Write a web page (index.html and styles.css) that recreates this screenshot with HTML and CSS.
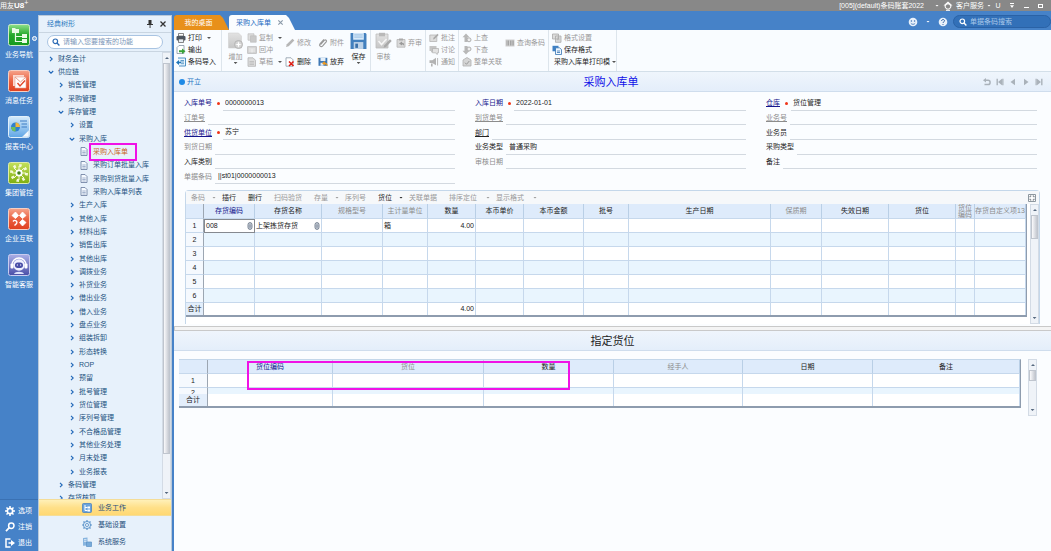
FILE: index.html
```
<!DOCTYPE html>
<html lang="zh-Hans">
<head>
  <meta charset="UTF-8" />
  <meta name="viewport" content="width=device-width, initial-scale=1.0" />
  <title>采购入库单</title>
  <link rel="stylesheet" href="styles.css">
</head>
<body>
  <!-- 图标 -->
  <svg class="sprite" aria-hidden="true">
    <defs>
      <linearGradient id="gGreen" x1="0" y1="0" x2="0" y2="1"><stop offset="0" stop-color="#8fe08a"/><stop offset=".5" stop-color="#25a82c"/><stop offset="1" stop-color="#159a1e"/></linearGradient>
      <linearGradient id="gRed" x1="0" y1="0" x2="0" y2="1"><stop offset="0" stop-color="#f6a58c"/><stop offset=".5" stop-color="#ea6040"/><stop offset="1" stop-color="#e0401f"/></linearGradient>
      <linearGradient id="gBlue" x1="0" y1="0" x2="0" y2="1"><stop offset="0" stop-color="#d6ebfb"/><stop offset="1" stop-color="#5fa5e6"/></linearGradient>
      <linearGradient id="gLime" x1="0" y1="0" x2="0" y2="1"><stop offset="0" stop-color="#c3e05c"/><stop offset="1" stop-color="#7fae10"/></linearGradient>
      <linearGradient id="gViolet" x1="0" y1="0" x2="0" y2="1"><stop offset="0" stop-color="#a9aee6"/><stop offset="1" stop-color="#4a4fa8"/></linearGradient>
      <linearGradient id="gGray" x1="0" y1="0" x2="0" y2="1"><stop offset="0" stop-color="#e2e2e2"/><stop offset="1" stop-color="#c6c6c6"/></linearGradient>
    </defs>
    <symbol id="app-nav" viewBox="0 0 22 22"><rect x=".5" y=".5" width="21" height="21" rx="2" fill="url(#gGreen)" stroke="#cdeacb"/><path d="M4 4h3l1 1h3v4H4zM14 10h5v4h-5zM14 15h5v4h-5z" fill="#e9fbe6"/><path d="M7.500 9v8.500H14M7.500 12.500H14" fill="none" stroke="#e9fbe6" stroke-width="1.200"/></symbol>
    <symbol id="app-msg" viewBox="0 0 22 22"><rect x=".5" y=".5" width="21" height="21" rx="2" fill="url(#gRed)" stroke="#f5cfc3"/><path d="M5 5h11v11H5z" fill="#fbd9cf"/><path d="M7 7h11v11H7z" fill="#fff" stroke="#e9a08d" stroke-width=".6"/><path d="M7 7l5.500 5L18 7" fill="none" stroke="#e9a08d"/><path d="M9.500 13l2.500 3 5-5.500" fill="none" stroke="#e0482a" stroke-width="1.400"/></symbol>
    <symbol id="app-report" viewBox="0 0 22 22"><rect x=".5" y=".5" width="21" height="21" rx="2" fill="url(#gBlue)" stroke="#e2f0fb"/><circle cx="7.500" cy="11" r="4.500" fill="#2f80cf"/><path d="M7.500 11V6.500A4.500 4.500 0 0 1 12 11z" fill="#f3b63c"/><path d="M7.500 11H3A4.500 4.500 0 0 0 7.500 15.500z" fill="#6cbf5f"/><path d="M12 5h7M13.500 8H19M13.500 11H19" stroke="#3d7cc4"/><path d="M14 21l7-7v7z" fill="#f2f8fe" stroke="#9fc6ea" stroke-width=".6"/></symbol>
    <symbol id="app-group" viewBox="0 0 22 22"><rect x=".5" y=".5" width="21" height="21" rx="2" fill="url(#gLime)" stroke="#dcebae"/><circle cx="11" cy="11" r="7.500" fill="none" stroke="#f5f9d8" stroke-width="3" stroke-dasharray="2.400 3.490"/><path d="M11 4v14M4 11h14M6 6l10 10M16 6L6 16" stroke="#f5f9d8"/><circle cx="11" cy="11" r="3.500" fill="#fff"/><circle cx="11" cy="11" r="1.800" fill="#3f7f1a"/></symbol>
    <symbol id="app-corp" viewBox="0 0 22 22"><rect x=".5" y=".5" width="21" height="21" rx="2" fill="url(#gRed)" stroke="#f5cfc3"/><path d="M7.500 4l3 3.500-3 3-3.500-3zM14.500 4L18 7.500l-3.500 3-3-3zM14.500 11.500l3.500 3-3.500 3.500-3-3.500z" fill="#fff" stroke="#fff" stroke-width=".8" stroke-linejoin="round"/><path d="M5 13.500c2-2.500 5 0 3.500 2L6.500 17.500" fill="none" stroke="#fff" stroke-width="1.400"/></symbol>
    <symbol id="app-robot" viewBox="0 0 22 22"><rect x=".5" y=".5" width="21" height="21" rx="2" fill="url(#gViolet)" stroke="#c9ccf0"/><path d="M4 11a7 7 0 0 1 14 0" fill="none" stroke="#fff" stroke-width="1.400"/><circle cx="11" cy="11" r="5.800" fill="#eef0ff"/><rect x="7" y="8.500" width="8" height="5.500" rx="2.700" fill="#4a4fa8"/><path d="M8.800 11h1.200M12 11h1.200" stroke="#fff"/><rect x="2.500" y="9.500" width="3" height="5" rx="1" fill="#fff"/><rect x="16.500" y="9.500" width="3" height="5" rx="1" fill="#fff"/><path d="M6 20c1-3 9-3 10 0" fill="#dfe2fb"/></symbol>
    <symbol id="gear" viewBox="0 0 10 10"><circle cx="5" cy="5" r="2.700" fill="none" stroke="currentColor" stroke-width="1.700"/><path d="M5 0v2M5 8v2M0 5h2M8 5h2M1.500 1.500L3 3M7 7l1.500 1.500M8.500 1.500L7 3M3 7L1.500 8.500" stroke="currentColor" stroke-width="1.500"/></symbol>
    <symbol id="gear-thin" viewBox="0 0 10 10"><circle cx="5" cy="5" r="3.600" fill="#dcebf8" stroke="currentColor" stroke-width=".9"/><circle cx="5" cy="5" r="1.500" fill="#fff" stroke="currentColor" stroke-width=".9"/><path d="M5 0v1.500M5 8.500V10M0 5h1.500M8.500 5H10M1.500 1.500l1 1M7.500 7.500l1 1M8.500 1.500l-1 1M2.500 7.500l-1 1" stroke="currentColor" stroke-width="1.200"/></symbol>
    <symbol id="key" viewBox="0 0 10 10"><circle cx="6.300" cy="3.700" r="2.700" fill="none" stroke="currentColor" stroke-width="1.500"/><path d="M4.300 5.700L1 9.200" stroke="currentColor" stroke-width="1.700"/></symbol>
    <symbol id="exit" viewBox="0 0 10 10"><path d="M5.500 1H1v8h4.500" fill="none" stroke="currentColor" stroke-width="1.500"/><path d="M3.500 4.200H6V2l4 3-4 3V5.800H3.500z" fill="currentColor"/></symbol>
    <symbol id="pin" viewBox="0 0 8 8"><path d="M2.500 0h3v4H7v1H1V4h1.500zM3.600 5h.9v3h-.9z" fill="currentColor"/></symbol>
    <symbol id="close" viewBox="0 0 8 8"><path d="M1.500 1.500l5 5M6.500 1.500l-5 5" stroke="currentColor" stroke-width="1.300"/></symbol>
    <symbol id="search" viewBox="0 0 8 8"><circle cx="3.300" cy="3.300" r="2.300" fill="none" stroke="currentColor" stroke-width="1.200"/><path d="M5 5l2.400 2.400" stroke="currentColor" stroke-width="1.400"/></symbol>
    <symbol id="right" viewBox="0 0 6 6"><path d="M2 .8L4.200 3 2 5.200" fill="none" stroke="currentColor" stroke-width="1.100"/></symbol>
    <symbol id="down" viewBox="0 0 6 6"><path d="M.8 2L3 4.200 5.200 2" fill="none" stroke="currentColor" stroke-width="1.100"/></symbol>
    <symbol id="doc" viewBox="0 0 8 9"><path d="M1 .5h4l2 2v6H1z" fill="#f6faff" stroke="#66799c" stroke-width=".8"/><path d="M2.300 4h3.400M2.300 5.500h3.400M2.300 7h3.400" stroke="#7f93b8" stroke-width=".7"/></symbol>
    <symbol id="printer" viewBox="0 0 10 10"><path d="M2.500.5h5V3h-5z" fill="#fff" stroke="#555" stroke-width=".7"/><rect x=".5" y="3" width="9" height="4.500" rx="1" fill="#4d5560"/><path d="M2.500 6h5v3.500h-5z" fill="#e8eef5" stroke="#555" stroke-width=".7"/></symbol>
    <symbol id="output" viewBox="0 0 10 10"><path d="M1 2.500L3 .5h5v8H1z" fill="#fff" stroke="#8595a5" stroke-width=".8"/><path d="M3 5.200h3V3.500L9.500 6.200 6 9V7.200H3z" fill="#37a337"/></symbol>
    <symbol id="import" viewBox="0 0 10 10"><path d="M2 1h7.500v8H3" fill="#eaf5fd" stroke="#3c87bd" stroke-width=".9"/><path d="M4.500 3.500H8M4.500 5H8M5 6.700h3" stroke="#3c87bd" stroke-width=".8"/><path d="M0 5.500L3 3v1.700h2v1.600H3V8z" fill="#2076b8"/></symbol>
    <symbol id="add" viewBox="0 0 16 18"><path d="M1 1h10l3 3v12H1z" fill="url(#gGray)" stroke="#d0d0d0" stroke-width=".6"/><circle cx="11" cy="12.500" r="4" fill="#d4d4d4" stroke="#b4b4b4"/><path d="M11 10.300v4.400M8.800 12.500h4.400" stroke="#fff" stroke-width="1.200"/></symbol>
    <symbol id="copy" viewBox="0 0 10 10"><path d="M1 .8h6v6.400H1z" fill="#dedede" stroke="#bdbdbd" stroke-width=".7"/><path d="M3.500 2.800h5.700v6.400H3.500z" fill="#c9c9c9" stroke="#bdbdbd" stroke-width=".7"/></symbol>
    <symbol id="card" viewBox="0 0 10 10"><path d="M.6 1.600h8.800v6.800H.6z" fill="#d6d6d6" stroke="#b9b9b9" stroke-width=".8"/><path d="M2 4h6M2 6h6M5 4v3.500" stroke="#f2f2f2" stroke-width=".8"/></symbol>
    <symbol id="draft" viewBox="0 0 10 10"><path d="M1 .8h5l2.500 2.500v6H1z" fill="#dcdcdc" stroke="#b5b5b5" stroke-width=".8"/><path d="M2.500 4.500H7M2.500 6H7M2.500 7.500H7" stroke="#b5b5b5" stroke-width=".7"/></symbol>
    <symbol id="pencil" viewBox="0 0 10 10"><path d="M1 9l.8-2.700L7.500.8l1.800 1.700-5.600 5.700z" fill="#b6b6b6"/></symbol>
    <symbol id="clip" viewBox="0 0 10 10"><path d="M2.500 6.500l4-4.300c1-1 2.700.4 1.700 1.700L4.500 8.100C3 9.500.6 7.500 2 5.800L6 1.500" fill="none" stroke="currentColor" stroke-width="1.200"/></symbol>
    <symbol id="clip-up" viewBox="0 0 6 8"><rect x="1" y=".6" width="4" height="6.800" rx="2" fill="#c9d1db" stroke="currentColor" stroke-width=".9"/><path d="M3 2.300v3.500" stroke="currentColor" stroke-width=".9"/></symbol>
    <symbol id="delete" viewBox="0 0 10 10"><path d="M1 .8h5l2 2v6.400H1z" fill="#fff" stroke="#7d8c9c" stroke-width=".7"/><path d="M4 4.500l4.500 4.500M8.500 4.500L4 9" stroke="#e01c12" stroke-width="1.500"/></symbol>
    <symbol id="discard" viewBox="0 0 10 10"><path d="M.5.8h8.800v8H.5z" fill="#3f78b5"/><path d="M2.500.8h5V4h-5z" fill="#e5f0fa"/><path d="M2.500 5.800h3v3h-3z" fill="#dfe9f4"/><path d="M9.800 9.500c0-3-1.500-4-3-4V4L4 6.300l2.800 2.200V7.200c1 0 2 .6 3 2.300z" fill="#ef9a21"/></symbol>
    <symbol id="save" viewBox="0 0 16 16"><path d="M.5.5h14l1 1v14H.5z" fill="#4380be"/><path d="M3 .5h10v6.300H3z" fill="#d9eafa"/><path d="M4 2.300h8M4 4.300h8" stroke="#88b3dc" stroke-width=".8"/><path d="M3.500 9h9v6.500h-9z" fill="#bdd2e8"/><path d="M5 10.500h2.500v4H5z" fill="#3a6fa8"/></symbol>
    <symbol id="audit" viewBox="0 0 17 18"><path d="M1 2h12v14H1z" fill="url(#gGray)" stroke="#bdbdbd" stroke-width=".8"/><path d="M4 .8h6v3.500H4z" fill="#b9b9b9"/><path d="M3.500 9l3 3.500 5-5.500" fill="none" stroke="#f6f6f6" stroke-width="1.500"/><path d="M8.500 15.800l.8-2.500 5.700-6 1.700 1.700-5.700 6z" fill="#a9a9a9"/></symbol>
    <symbol id="unaudit" viewBox="0 0 10 10"><path d="M1 1.500h8v7.700H1z" fill="#d9d9d9" stroke="#b5b5b5" stroke-width=".8"/><path d="M3 .5h4v2H3z" fill="#aaa"/><path d="M3 5.500l3-2v1.200c2 0 2.300 1.300 2 3-.4-1-1-1.300-2-1.300v1.200z" fill="#999"/></symbol>
    <symbol id="note" viewBox="0 0 10 10"><path d="M.8 2h7v6.500h-7z" fill="#ddd" stroke="#b5b5b5" stroke-width=".8"/><path d="M4 6.500l.5-1.700 4-4 1.100 1.100-4 4z" fill="#a9a9a9"/></symbol>
    <symbol id="talk" viewBox="0 0 10 10"><path d="M.5 1h7v5H4L2 7.800V6H.5z" fill="#c4c4c4"/><path d="M3.500 3.500h6v4.300H8.300v1.700L6.300 7.800H3.500z" fill="#e2e2e2" stroke="#adadad" stroke-width=".7"/></symbol>
    <symbol id="horn" viewBox="0 0 10 10"><path d="M.5 3.300h2.800L7 .8v7.500L3.300 6H.5zM2 6.500h1.600v3H2z" fill="#b3b3b3"/><path d="M8.600 1v7.500" stroke="#b9b9b9"/></symbol>
    <symbol id="up-doc" viewBox="0 0 10 10"><path d="M4 .5l3.500 3.700H5.600V9H2.500V4.200H.5z" fill="#b8b8b8"/><circle cx="7" cy="6.800" r="2" fill="#eee" stroke="#a8a8a8" stroke-width=".9"/></symbol>
    <symbol id="down-doc" viewBox="0 0 10 10"><path d="M4 9.500L.5 5.800h2V1h3.100v4.800h1.900z" fill="#b8b8b8"/><circle cx="7" cy="4" r="2" fill="#eee" stroke="#a8a8a8" stroke-width=".9"/></symbol>
    <symbol id="link-doc" viewBox="0 0 10 10"><path d="M1 3l4-2.500L9 3v6H1z" fill="#d5d5d5" stroke="#b0b0b0" stroke-width=".8"/><path d="M3 5.700l1.500 1.600L7.300 4" fill="none" stroke="#999"/></symbol>
    <symbol id="barcode" viewBox="0 0 10 10"><path d="M.5 1.500h9v7h-9z" fill="#cfcfcf"/><path d="M2 2.500v5M3.500 2.500v5M5.500 2.500v5M7 2.500v5M8.300 2.500v5" stroke="#999" stroke-width=".8"/></symbol>
    <symbol id="format" viewBox="0 0 10 10"><path d="M.5 1h6v5h-6zM3.500 3h5.500v6.300H3.500z" fill="#dcdcdc" stroke="#aaa" stroke-width=".8"/><path d="M5 5h2.500M5 6.700h2.500" stroke="#aaa" stroke-width=".7"/></symbol>
    <symbol id="save-format" viewBox="0 0 10 10"><path d="M.5.8h6v5.500h-6z" fill="#3e80c4"/><path d="M3.500 2.800h4l2 1.700v5H3.500z" fill="#eef6fe" stroke="#3573b4" stroke-width=".8"/><path d="M5 6h3M5 7.500h3" stroke="#3573b4" stroke-width=".8"/></symbol>
    <symbol id="headset" viewBox="0 0 10 10"><path d="M5 .5L9.500 4.500H8.200V6.500H1.800V4.500H.5z" fill="#fff"/><circle cx="5" cy="5.500" r="2.700" fill="#888" stroke="#fff"/><path d="M3 9.300h4" stroke="#fff"/></symbol>
    <symbol id="smile" viewBox="0 0 10 10"><circle cx="5" cy="5" r="4.300" fill="#e8f1fb"/><circle cx="3.400" cy="4" r=".8" fill="#3a70b4"/><circle cx="6.600" cy="4" r=".8" fill="#3a70b4"/><path d="M2.800 6.200c1 1.500 3.400 1.500 4.400 0" fill="none" stroke="#3a70b4" stroke-width=".8"/></symbol>
    <symbol id="help" viewBox="0 0 10 10"><circle cx="5" cy="5" r="4.300" fill="#e8f1fb"/><path d="M3.600 4c0-2 2.900-1.900 2.900-.2C6.500 4.900 5 4.800 5 6" fill="none" stroke="#2d5f9f"/><circle cx="5" cy="7.500" r=".6" fill="#2d5f9f"/></symbol>
    <symbol id="undo" viewBox="0 0 8 8"><path d="M2 2.300h3a1.900 1.900 0 0 1 0 4.200H1.500" fill="none" stroke="currentColor" stroke-width="1.500"/><path d="M0 2.300L3 0v4.600z" fill="currentColor"/></symbol>
    <symbol id="first" viewBox="0 0 8 8"><path d="M.5.8h1.400v6.400H.5zM6 .8v6.400L2 4zM6.200.8h1.300v6.400H6.200z" fill="currentColor"/></symbol>
    <symbol id="prev" viewBox="0 0 8 8"><path d="M6 .8v6.400L1.500 4z" fill="currentColor"/></symbol>
    <symbol id="work" viewBox="0 0 10 10"><rect x=".5" y=".5" width="9" height="9" rx="1" fill="#6ba3dc" stroke="#4b84c0" stroke-width=".8"/><path d="M3 2v5.500h2.500M3 4.500h2.500" fill="none" stroke="#fff"/><path d="M5.500 3.500h2.500v2H5.500zM5.500 6.500h2.500v2H5.500z" fill="#fff"/></symbol>
    <symbol id="server" viewBox="0 0 10 10"><path d="M1 1l4.500-.5v8L1 8.800z" fill="#88b5df"/><path d="M2 2.700h2.500M2 4.300h2.500" stroke="#fff" stroke-width=".7"/><path d="M4.500 5h5v4.500h-5z" fill="#78abd9" stroke="#5a91c6" stroke-width=".7"/></symbol>
    <symbol id="expand" viewBox="0 0 8 8"><path d="M.5.5h7v7h-7z" fill="#fff" stroke="#8d979f"/><path d="M2 3.300V2h1.300M4.700 2H6v1.300M6 4.700V6H4.700M3.300 6H2V4.700" fill="none" stroke="#5d6870" stroke-width=".9"/></symbol>
  </svg>

  <header class="titlebar">
    <span class="brand">用友<b>U8</b><sup>+</sup></span>
    <span class="account">[005](default)条码账套2022</span>
    <i class="caret account-caret"></i>
    <button class="service"><svg class="icon"><use href="#headset"/></svg>客户服务<i class="caret"></i></button>
    <div class="window-buttons">
      <button aria-label="U会员">U</button>
      <button aria-label="菜单"><i class="caret lined"></i></button>
      <button aria-label="最小化"><i class="win-min"></i></button>
      <button aria-label="还原"><i class="win-restore"></i></button>
    </div>
  </header>

  <div class="shell">
    <nav class="rail">
      <a href="#" class="rail-item"><svg><use href="#app-nav"/></svg>业务导航<i class="rail-dot"></i></a>
      <a href="#" class="rail-item"><svg><use href="#app-msg"/></svg>消息任务</a>
      <a href="#" class="rail-item"><svg><use href="#app-report"/></svg>报表中心</a>
      <a href="#" class="rail-item"><svg><use href="#app-group"/></svg>集团管控</a>
      <a href="#" class="rail-item"><svg><use href="#app-corp"/></svg>企业互联</a>
      <a href="#" class="rail-item"><svg><use href="#app-robot"/></svg>智能客服</a>
      <div class="rail-foot">
        <button><svg class="icon"><use href="#gear"/></svg>选项</button>
        <button><svg class="icon"><use href="#key"/></svg>注销</button>
        <button><svg class="icon"><use href="#exit"/></svg>退出</button>
      </div>
    </nav>

    <aside class="sidebar">
      <div class="side-head">
        <span>经典树形</span>
        <button aria-label="固定"><svg><use href="#pin"/></svg></button>
        <button aria-label="关闭"><svg><use href="#close"/></svg></button>
      </div>
      <div class="side-search">
        <label for="menuSearch"><svg><use href="#search"/></svg></label>
        <input type="text" id="menuSearch" placeholder="请输入您要搜索的功能" aria-label="搜索功能">
      </div>
      <div class="tree-wrap">
        <ul class="tree">
          <li class="l1"><svg><use href="#right"/></svg>财务会计</li>
          <li class="l1"><svg><use href="#down"/></svg>供应链</li>
          <li class="l2"><svg><use href="#right"/></svg>销售管理</li>
          <li class="l2"><svg><use href="#right"/></svg>采购管理</li>
          <li class="l2"><svg><use href="#down"/></svg>库存管理</li>
          <li class="l3"><svg><use href="#right"/></svg>设置</li>
          <li class="l3"><svg><use href="#down"/></svg>采购入库</li>
          <li class="l4 current"><svg><use href="#doc"/></svg><a href="#">采购入库单</a></li>
          <li class="l4"><svg><use href="#doc"/></svg><a href="#">采购订单批量入库</a></li>
          <li class="l4"><svg><use href="#doc"/></svg><a href="#">采购到货批量入库</a></li>
          <li class="l4"><svg><use href="#doc"/></svg><a href="#">采购入库单列表</a></li>
          <li class="l3"><svg><use href="#right"/></svg>生产入库</li>
          <li class="l3"><svg><use href="#right"/></svg>其他入库</li>
          <li class="l3"><svg><use href="#right"/></svg>材料出库</li>
          <li class="l3"><svg><use href="#right"/></svg>销售出库</li>
          <li class="l3"><svg><use href="#right"/></svg>其他出库</li>
          <li class="l3"><svg><use href="#right"/></svg>调拨业务</li>
          <li class="l3"><svg><use href="#right"/></svg>补货业务</li>
          <li class="l3"><svg><use href="#right"/></svg>借出业务</li>
          <li class="l3"><svg><use href="#right"/></svg>借入业务</li>
          <li class="l3"><svg><use href="#right"/></svg>盘点业务</li>
          <li class="l3"><svg><use href="#right"/></svg>组装拆卸</li>
          <li class="l3"><svg><use href="#right"/></svg>形态转换</li>
          <li class="l3"><svg><use href="#right"/></svg>ROP</li>
          <li class="l3"><svg><use href="#right"/></svg>预留</li>
          <li class="l3"><svg><use href="#right"/></svg>批号管理</li>
          <li class="l3"><svg><use href="#right"/></svg>货位管理</li>
          <li class="l3"><svg><use href="#right"/></svg>序列号管理</li>
          <li class="l3"><svg><use href="#right"/></svg>不合格品管理</li>
          <li class="l3"><svg><use href="#right"/></svg>其他业务处理</li>
          <li class="l3"><svg><use href="#right"/></svg>月末处理</li>
          <li class="l3"><svg><use href="#right"/></svg>业务报表</li>
          <li class="l2"><svg><use href="#right"/></svg>条码管理</li>
          <li class="l2"><svg><use href="#right"/></svg>存货核算</li>
        </ul>
        <div class="scrollbar tree-scroll"><i class="arrow up"></i><i class="thumb"></i><i class="arrow"></i></div>
      </div>
      <div class="side-tabs">
        <button class="active"><svg class="icon"><use href="#work"/></svg>业务工作</button>
        <button><svg class="icon"><use href="#gear-thin"/></svg>基础设置</button>
        <button><svg class="icon"><use href="#server"/></svg>系统服务</button>
      </div>
    </aside>

    <main class="main">
      <div class="tabbar">
        <button class="tab home">我的桌面</button>
        <button class="tab active">采购入库单<svg><use href="#close"/></svg></button>
        <div class="tools">
          <button aria-label="用户"><svg class="icon"><use href="#smile"/></svg></button>
          <i class="caret"></i>
          <button aria-label="帮助"><svg class="icon"><use href="#help"/></svg></button>
          <div class="bill-search">
            <label for="billSearch"><svg><use href="#search"/></svg></label>
            <input type="text" id="billSearch" placeholder="单据条码搜索" aria-label="单据条码搜索">
          </div>
        </div>
      </div>

      <div class="toolbar">
        <div class="group first">
          <div class="stack">
            <button><svg class="icon"><use href="#printer"/></svg>打印<i class="caret far"></i></button>
            <button><svg class="icon"><use href="#output"/></svg>输出</button>
            <button><svg class="icon"><use href="#import"/></svg>条码导入</button>
          </div>
        </div>
        <div class="group edit">
          <button class="big" disabled><svg><use href="#add"/></svg>增加<i class="caret"></i></button>
          <div class="stack">
            <button disabled><svg class="icon"><use href="#copy"/></svg>复制<i class="caret far"></i></button>
            <button disabled><svg class="icon"><use href="#card"/></svg>回冲</button>
            <button disabled><svg class="icon"><use href="#draft"/></svg>草稿<i class="caret far"></i></button>
          </div>
          <div class="pair">
            <button disabled><svg class="icon"><use href="#pencil"/></svg>修改</button>
            <button disabled><svg class="icon"><use href="#clip"/></svg>附件</button>
            <button><svg class="icon"><use href="#delete"/></svg>删除</button>
            <button><svg class="icon"><use href="#discard"/></svg>放弃</button>
          </div>
          <button class="big"><svg><use href="#save"/></svg>保存<i class="caret"></i></button>
        </div>
        <div class="group audit">
          <button class="big" disabled><svg><use href="#audit"/></svg>审核</button>
          <div class="pair single">
            <button disabled><svg class="icon"><use href="#unaudit"/></svg>弃审</button>
          </div>
        </div>
        <div class="group">
          <div class="stack">
            <button disabled><svg class="icon"><use href="#note"/></svg>批注</button>
            <button disabled><svg class="icon"><use href="#talk"/></svg>讨论</button>
            <button disabled><svg class="icon"><use href="#horn"/></svg>通知</button>
          </div>
        </div>
        <div class="group">
          <div class="stack">
            <button disabled><svg class="icon"><use href="#up-doc"/></svg>上查</button>
            <button disabled><svg class="icon"><use href="#down-doc"/></svg>下查</button>
            <button disabled><svg class="icon"><use href="#link-doc"/></svg>整单关联</button>
          </div>
          <div class="pair single">
            <button disabled><svg class="icon"><use href="#barcode"/></svg>查询条码</button>
          </div>
        </div>
        <div class="group last">
          <div class="stack">
            <button disabled><svg class="icon"><use href="#format"/></svg>格式设置</button>
            <button><svg class="icon"><use href="#save-format"/></svg>保存格式</button>
            <button class="template">采购入库单打印模<i class="caret"></i></button>
          </div>
        </div>
      </div>

      <div class="bill-head">
        <span class="state"><i></i>开立</span>
        <h1>采购入库单</h1>
        <div class="pager">
          <button aria-label="刷新"><svg><use href="#undo"/></svg></button>
          <button aria-label="首张"><svg><use href="#first"/></svg></button>
          <button aria-label="上张"><svg><use href="#prev"/></svg></button>
          <button aria-label="下张" class="flip"><svg><use href="#prev"/></svg></button>
          <button aria-label="末张" class="flip"><svg><use href="#first"/></svg></button>
        </div>
      </div>

      <form class="bill-form">
        <div class="col">
          <div class="field key req"><label for="f1">入库单号</label><input id="f1" value="0000000013"></div>
          <div class="field off link"><label for="f2">订单号</label><input id="f2"></div>
          <div class="field key req link"><label for="f3">供货单位</label><input id="f3" value="苏宁"></div>
          <div class="field off"><label for="f4">到货日期</label><input id="f4"></div>
          <div class="field"><label for="f5">入库类别</label><input id="f5"></div>
          <div class="field off"><label for="f6">单据条码</label><input id="f6" value="||st01|0000000013"></div>
        </div>
        <div class="col">
          <div class="field key req"><label for="f7">入库日期</label><input id="f7" value="2022-01-01"></div>
          <div class="field off link"><label for="f8">到货单号</label><input id="f8"></div>
          <div class="field link"><label for="f9">部门</label><input id="f9"></div>
          <div class="field"><label for="f10">业务类型</label><input id="f10" value="普通采购"></div>
          <div class="field off"><label for="f11">审核日期</label><input id="f11"></div>
        </div>
        <div class="col">
          <div class="field key req link"><label for="f12">仓库</label><input id="f12" value="货位管理"></div>
          <div class="field off link"><label for="f13">业务号</label><input id="f13"></div>
          <div class="field"><label for="f14">业务员</label><input id="f14"></div>
          <div class="field"><label for="f15">采购类型</label><input id="f15"></div>
          <div class="field"><label for="f16">备注</label><input id="f16"></div>
        </div>
      </form>

      <section class="lines">
        <div class="line-tools">
          <button disabled>条码<i class="caret"></i></button>
          <button>插行</button>
          <button>删行</button>
          <button disabled>扫码验货</button>
          <button disabled>存量<i class="caret"></i></button>
          <button disabled>序列号</button>
          <button>货位<i class="caret"></i></button>
          <button disabled>关联单据</button>
          <button disabled class="wide">排序定位<i class="caret"></i></button>
          <button disabled class="wide">显示格式<i class="caret"></i></button>
          <button class="expand" aria-label="展开"><svg><use href="#expand"/></svg></button>
        </div>
        <div class="grid-wrap">
          <table class="grid">
            <colgroup>
              <col class="w18"><col class="w51"><col class="w67"><col class="w61"><col class="w45"><col class="w48"><col class="w48"><col class="w60"><col class="w45"><col><col class="w51"><col class="w67"><col class="w67"><col class="w19"><col class="w51">
            </colgroup>
            <thead>
              <tr><th></th><th class="key">存货编码</th><th>存货名称</th><th class="off">规格型号</th><th class="off">主计量单位</th><th>数量</th><th>本币单价</th><th>本币金额</th><th>批号</th><th>生产日期</th><th class="off">保质期</th><th>失效日期</th><th>货位</th><th class="off two">货位编码</th><th class="off">存货自定义项13</th></tr>
            </thead>
            <tbody>
              <tr><th>1</th><td class="focus"><span class="cell">008<svg><use href="#clip-up"/></svg></span></td><td><span class="cell">上架拣货存货<svg><use href="#clip-up"/></svg></span></td><td></td><td>箱</td><td class="num">4.00</td><td></td><td></td><td></td><td></td><td></td><td></td><td></td><td></td><td></td></tr>
              <tr><th>2</th><td></td><td></td><td></td><td></td><td></td><td></td><td></td><td></td><td></td><td></td><td></td><td></td><td></td><td></td></tr>
              <tr><th>3</th><td></td><td></td><td></td><td></td><td></td><td></td><td></td><td></td><td></td><td></td><td></td><td></td><td></td><td></td></tr>
              <tr><th>4</th><td></td><td></td><td></td><td></td><td></td><td></td><td></td><td></td><td></td><td></td><td></td><td></td><td></td><td></td></tr>
              <tr><th>5</th><td></td><td></td><td></td><td></td><td></td><td></td><td></td><td></td><td></td><td></td><td></td><td></td><td></td><td></td></tr>
              <tr><th>6</th><td></td><td></td><td></td><td></td><td></td><td></td><td></td><td></td><td></td><td></td><td></td><td></td><td></td><td></td></tr>
            </tbody>
            <tfoot>
              <tr><th>合计</th><td></td><td></td><td></td><td></td><td class="num">4.00</td><td></td><td></td><td></td><td></td><td></td><td></td><td></td><td></td><td></td></tr>
            </tfoot>
          </table>
          <div class="scrollbar"><i class="arrow up"></i><i class="thumb"></i><i class="arrow"></i></div>
        </div>
      </section>

      <div class="splitter"></div>
      <div class="detail-head"><h2>指定货位</h2></div>

      <section class="detail">
        <table class="grid">
          <colgroup>
            <col class="w29"><col class="w125"><col class="w151"><col class="w130"><col class="w129"><col class="w130"><col>
          </colgroup>
          <thead>
            <tr><th></th><th class="key">货位编码</th><th class="off">货位</th><th>数量</th><th class="off">经手人</th><th>日期</th><th>备注</th></tr>
          </thead>
          <tbody>
            <tr><th>1</th><td></td><td></td><td></td><td></td><td></td><td></td></tr>
            <tr class="cut"><th><span>2</span></th><td></td><td></td><td></td><td></td><td></td><td></td></tr>
          </tbody>
          <tfoot>
            <tr><th>合计</th><td></td><td></td><td></td><td></td><td></td><td></td></tr>
          </tfoot>
        </table>
        <div class="scrollbar"><i class="arrow up"></i><i class="thumb"></i><i class="arrow"></i></div>
        <div class="mark"></div>
      </section>
    </main>
  </div>
</body>
</html>
```
FILE: styles.css
```
* { box-sizing: border-box; margin: 0; padding: 0; }
body {
  height: 100vh; overflow: hidden; display: flex; flex-direction: column;
  font-family: "Liberation Sans", "Noto Sans CJK SC", sans-serif; font-size: 7px; line-height: 12px;
  color: #222; background: #4682c8;
}
button, input { font: inherit; color: inherit; border: none; background: none; outline: none; min-width: 0; }
button { display: flex; align-items: center; white-space: nowrap; cursor: pointer; }
a { color: inherit; text-decoration: none; }
svg { display: block; flex: none; width: 8px; height: 8px; }
.sprite { position: absolute; width: 0; height: 0; }
.icon { width: 10px; height: 10px; }
.caret { display: block; flex: none; width: 4px; height: 2px; background: currentColor; clip-path: polygon(0 0, 100% 0, 50% 100%); }

/* 标题栏 */
.titlebar { flex: none; height: 11px; display: flex; align-items: center; background: #888; color: #fff; line-height: 11px; }
.brand { flex: 1; white-space: nowrap; }
.brand b { font-size: 8px; }
.brand sup { font-size: 7px; line-height: 4px; }
.account-caret { margin: 0 4px 0 11px; }
.service { gap: 3px; line-height: 11px; }
.window-buttons { display: flex; padding-right: 4px; }
.window-buttons button { width: 14px; height: 11px; justify-content: center; }
.caret.lined { height: 5px; clip-path: polygon(0 0, 100% 0, 100% 20%, 0 20%, 0 45%, 100% 45%, 50% 100%, 0 45%); }
.win-min { width: 5px; height: 1px; margin-top: 4px; background: #fff; }
.win-restore { width: 5px; height: 4px; border: 1px solid #fff; }

.shell { flex: 1; min-height: 0; display: flex; }

/* 左侧导航条 */
.rail { flex: none; width: 38px; padding-top: 13px; display: flex; flex-direction: column; color: #fff; }
.rail-item { position: relative; height: 46px; display: flex; flex-direction: column; align-items: center; gap: 3px; }
.rail-item svg { width: 22px; height: 22px; }
.rail-dot { position: absolute; right: 1px; top: 12px; width: 5px; height: 5px; border: 1px solid #fff; border-radius: 50%; background: #7fa9dc; }
.rail-foot { margin-top: auto; padding: 3px 0 0 5px; border-top: 1px solid #3a71b3; }
.rail-foot button { height: 16px; gap: 3px; }

/* 功能树 */
.sidebar { flex: none; width: 134px; margin-top: 4px; display: flex; flex-direction: column; background: #e7f1fb; border: 1px solid #b9c9da; border-bottom: none; }
.side-head { height: 17px; flex: none; display: flex; align-items: center; gap: 5px; padding: 0 4px 0 8px; color: #2a78c0; border-bottom: 1px solid #c9d5e1; }
.side-head span { flex: 1; }
.side-head button { color: #333; }
.side-search { flex: none; display: flex; align-items: center; gap: 3px; height: 14px; margin: 2px 8px; padding: 0 4px; background: #fff; border: 1px solid #a9c4e2; border-radius: 7px; color: #2e6cb5; }
.side-search input { flex: 1; height: 12px; }
.side-search input::placeholder { color: #7b96b8; }
.tree-wrap { flex: 1; min-height: 0; display: flex; overflow: hidden; border-top: 1px solid #c9d5e1; }
.tree { flex: 1; height: 453px; list-style: none; display: grid; grid-auto-rows: 1fr; color: #1c5280; }
.tree li { display: flex; align-items: center; gap: 4px; white-space: nowrap; }
.tree svg { width: 6px; height: 6px; color: #1f66b8; }
.tree .l1 { padding-left: 9px; }
.tree .l2 { padding-left: 19px; }
.tree .l3 { padding-left: 30px; }
.tree .l4 { padding-left: 41px; gap: 5px; }
.tree .l4 svg { width: 8px; height: 9px; }
.current a { position: relative; color: #c8641c; }
.current a::after { content: ""; position: absolute; inset: -3px -9px -3px -4px; border: 2px solid #f012e6; }
.side-tabs { flex: none; height: 52px; display: grid; grid-auto-rows: 1fr; color: #1e4f7c; }
.side-tabs button { gap: 6px; padding-left: 43px; }
.side-tabs .icon { color: #5b93c9; }
.side-tabs .active { background: linear-gradient(#fff0b8, #ffe089 50%, #ffd873); border: 1px solid #f4dd98; border-left: none; border-right: none; }

.scrollbar { flex: none; width: 9px; display: flex; flex-direction: column; justify-content: space-between; align-items: center; background: #eff3f8; border: 1px solid #d3dbe5; }
.scrollbar .arrow { flex: none; width: 4px; height: 2px; margin: 4px 0; background: #56697f; clip-path: polygon(0 0, 100% 0, 50% 100%); }
.scrollbar .arrow.up { transform: rotate(180deg); }
.scrollbar .thumb { flex: none; width: 7px; height: 11px; margin-bottom: auto; background: linear-gradient(90deg, #fafafc, #c3c7cf); border: 1px solid #bfc5ce; }
.tree-scroll .thumb { height: 391px; }

/* 主区域 */
.main { flex: 1; min-width: 0; margin-left: 2px; display: flex; flex-direction: column; background: linear-gradient(#4682c8 19px, #fbfdff 19px); }
.tabbar { flex: none; height: 19px; padding-top: 4px; display: flex; align-items: stretch; }
.tab { justify-content: center; border-radius: 3px 0 0 0; clip-path: polygon(0 0, calc(100% - 9px) 0, calc(100% - 6px) 20%, 100% 100%, 0 100%); }
.tab.home { width: 55px; padding-right: 6px; background: #e8901a; color: #fff; }
.tab.active { width: 66px; gap: 6px; padding-right: 4px; background: #fbfdff; color: #1767c0; }
.tab svg { width: 7px; height: 7px; color: #8a99a8; }
.tools { margin: -2px 0 0 auto; display: flex; align-items: center; gap: 8px; color: #fff; }
.bill-search { display: flex; align-items: center; gap: 3px; width: 98px; height: 13px; margin-left: -3px; padding-left: 5px; background: #3270b8; border: 1px solid #2a62a6; border-radius: 7px; }
.bill-search input { width: 76px; height: 11px; }
.bill-search input::placeholder { color: #a9c8ea; }

/* 工具栏 */
.toolbar { flex: none; height: 42px; display: flex; background: #f9fcff; border-bottom: 1px solid #d3dfe9; }
.toolbar button { gap: 2px; }
.toolbar button:disabled, .line-tools button:disabled { color: #999; cursor: default; }
.toolbar .caret { color: #555; }
.caret.far { margin-left: 3px; }
.group { flex: none; display: flex; padding: 2px 3px 0 3px; border-right: 1px solid #dde5ec; }
.group.first { padding: 2px 5px 0 2px; }
.group.edit { gap: 2px; padding: 2px 2px 0 4px; }
.group.last { padding-right: 0; }
.stack { display: grid; grid-auto-rows: 12px; align-content: start; }
.template { padding-left: 2px; }
.pair { display: grid; grid-template-columns: auto auto; grid-auto-rows: 19px; column-gap: 7px; padding: 1px 3px 0 1px; }
.pair.single { grid-template-columns: auto; padding: 1px 0 0 3px; }
.big { width: 19px; flex-direction: column; }
.toolbar .big { gap: 1px; }
.big svg { width: 17px; height: 18px; }
.big .caret { margin-top: -2px; }

/* 单据表头 */
.bill-head, .detail-head { flex: none; height: 20px; display: flex; align-items: center; background: linear-gradient(#eff5fc, #e4eefa); border-bottom: 1px solid #cfdded; }
.bill-head { padding: 0 8px 0 5px; }
.state { flex: 1; display: flex; align-items: center; gap: 2px; color: #2476c4; }
.state i { width: 6px; height: 6px; border-radius: 50%; background: #1f8ae6; }
h1, h2 { font-size: 11px; line-height: 18px; font-weight: normal; }
h1 { color: #1010e8; }
.pager { flex: 1; display: flex; justify-content: flex-end; gap: 5px; color: #aab2ba; }
.flip { transform: scaleX(-1); }

.bill-form { flex: none; height: 92px; padding: 4px 14px 0 10px; display: grid; grid-template-columns: repeat(3, 1fr); gap: 20px; }
.col { display: grid; grid-template-rows: repeat(6, 1fr); }
.field { display: flex; align-items: stretch; gap: 3px; }
.field label { align-self: center; white-space: nowrap; }
.field input { flex: 1; border-bottom: 1px solid #d3d9e0; padding-left: 3px; }
.field.key label { color: #15158c; }
.field.off label { color: #8c8c8c; }
.field.link label { text-decoration: underline; }
.field.req::after { content: ""; order: 1; align-self: center; width: 3px; height: 3px; margin-left: 2px; border-radius: 50%; background: #f03418; }
.field.req input { order: 2; padding-left: 2px; }

/* 表体 */
.lines { flex: none; margin: 6px 11px 0 11px; border: 1px solid #c4d7ea; border-bottom: none; border-radius: 4px 4px 0 0; }
.line-tools { height: 13px; display: flex; align-items: center; gap: 12px; padding: 0 3px 0 5px; background: #f6f8fa; }
.line-tools .caret { margin: 0 -6px 0 7px; }
.line-tools .wide .caret { margin-left: 9px; }
.line-tools .expand { margin-left: auto; }
.grid-wrap { display: flex; justify-content: space-between; gap: 3px; height: 120px; background: #fff; }
.grid { flex: 1; align-self: flex-start; table-layout: fixed; width: 100%; border-collapse: separate; border-spacing: 0; background: #fff; border-right: 1px solid #8e9cae; border-bottom: 2px solid #8e9cae; }
.grid th, .grid td { height: 14px; line-height: 12px; font-weight: normal; border-right: 1px solid #c6d8ec; border-bottom: 1px solid #c6d8ec; overflow: hidden; white-space: nowrap; }
.grid thead th { height: 15px; background: #deebfb; border-right-color: #b9cfe6; }
.grid tbody th { background: #f5f9fe; }
.grid tbody tr:nth-child(even) td { background: #e9f5fe; }
.grid tfoot th { height: 12px; background: #e3eefb; border-bottom: none; }
.grid tfoot td { height: 12px; border-bottom: none; }
.grid tr > :first-child { border-right-color: #9ca6b2; }
.grid .key { color: #15158c; }
.grid .off { color: #8c8c8c; }
.grid thead .two { white-space: normal; line-height: 7px; }
.grid .num { text-align: right; padding-right: 1px; }
.grid td { padding-left: 1px; }
.grid .focus { border: 1px solid #85898f; }
.cell { display: flex; align-items: center; justify-content: space-between; padding-right: 1px; }
.cell svg { width: 6px; color: #6c7788; }
.w18 { width: 18px; }
.w19 { width: 19px; }
.w29 { width: 29px; }
.w45 { width: 45px; }
.w48 { width: 48px; }
.w51 { width: 51px; }
.w60 { width: 60px; }
.w61 { width: 61px; }
.w67 { width: 67px; }
.w125 { width: 125px; }
.w129 { width: 129px; }
.w130 { width: 130px; }
.w151 { width: 151px; }
.lines .thumb { height: 24px; }

.splitter { flex: none; height: 5px; margin-top: 2px; background: #f4f4f4; border: 1px solid #c9c9c9; border-right: none; }

/* 指定货位 */
.detail-head { justify-content: center; }
.detail { position: relative; flex: none; height: 57px; margin: 8px 14px 0 5px; display: flex; gap: 7px; }
.detail .grid { border-top: 1px solid #c4d7ea; }
.detail .grid thead th { height: 14px; }
.cut span { display: block; height: 6px; overflow: hidden; line-height: 10px; }
.grid .cut th, .grid .cut td { height: 6px; border-bottom: none; }
.mark { position: absolute; left: 68px; top: 2px; width: 323px; height: 29px; border: 2px solid #f012e6; }
```
